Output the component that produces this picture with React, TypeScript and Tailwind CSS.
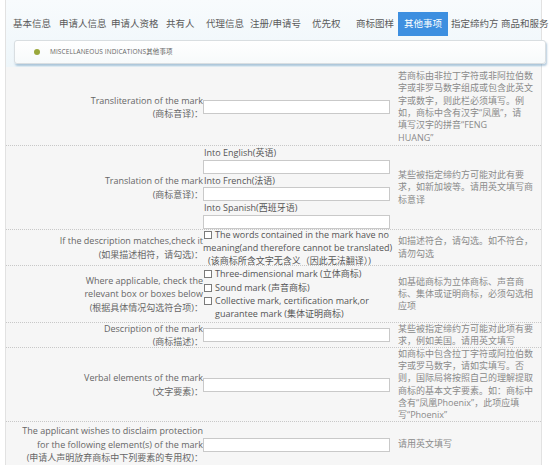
import React from 'react';

const tabs = [
  { label: '基本信息', w: 'w-[46px]' },
  { label: '申请人信息', w: 'w-[52px]' },
  { label: '申请人资格', w: 'w-[55px]' },
  { label: '共有人', w: 'w-[40px]' },
  { label: '代理信息', w: 'w-[44px]' },
  { label: '注册/申请号', w: 'w-[62px]' },
  { label: '优先权', w: 'w-[44px]' },
  { label: '商标图样', w: 'w-[42px]' },
];

const Box = () => (
  <span className="inline-block w-[8px] h-[8px] border border-[#7a7a7a] bg-white mr-[3px] align-[-1px]" />
);

const Input = () => <div className="w-[187px] h-[14px] border border-[#c9c9c9] bg-white" />;

const Label = ({ lines }: { lines: string[] }) => (
  <div className="w-[197px] shrink-0 text-right text-[#666] leading-[13.5px]">
    {lines.map((l) => (
      <div key={l}>{l}</div>
    ))}
  </div>
);

const Hint = ({ lines }: { lines: string[] }) => (
  <div className="flex-1 pl-[3px] text-[9px] leading-[12.3px] text-[#8a8a8a]">
    {lines.map((l) => (
      <div key={l}>{l}</div>
    ))}
  </div>
);

export default function App() {
  return (
    <div className="w-[558px] h-[465px] overflow-hidden bg-white font-['Open_Sans','Noto_Sans_CJK_SC',sans-serif] text-[9px]">
      <div className="ml-[5px] w-[537px] h-full border-l border-r border-[#e2e2e2]">
        {/* top tabs + header */}
        <div className="h-[67px] bg-gradient-to-b from-[#f8fbfd] to-[#eef6fa] pt-[12px]">
          <div className="flex items-center h-[24px] pl-[7px] text-[9.5px] text-[#5a5a5a] whitespace-nowrap">
            {tabs.map((t) => (
              <span key={t.label} className={`${t.w} shrink-0`}>
                {t.label}
              </span>
            ))}
            <span className="w-[50px] h-[24px] shrink-0 bg-[#3d8fe0] text-white flex items-center justify-center">
              其他事项
            </span>
            <span className="w-[50px] shrink-0 ml-[3px]">指定缔约方</span>
            <span className="shrink-0">商品和服务</span>
          </div>
          <div className="ml-[8px] mt-[4px] w-[532px] h-[24px] flex items-center border border-[#d9dee1] rounded-[3px] bg-gradient-to-b from-white to-[#f7fafb] shadow-[1px_2px_2px_rgba(90,140,180,0.45)]">
            <span className="ml-[19px] w-[6px] h-[6px] rounded-full bg-[#9aa83c]" />
            <span className="ml-[10px] text-[6.5px] text-[#666] tracking-[0.1px]">MISCELLANEOUS INDICATIONS其他事项</span>
          </div>
        </div>

        <div className="bg-[#f6f6f6] h-full pt-[2px]">
          {/* row 1 */}
          <div className="flex items-center h-[77px] border-b border-dotted border-[#c8c8c8]">
            <Label lines={['Transliteration of the mark', '(商标音译)：']} />
            <div className="w-[192px] shrink-0">
              <Input />
            </div>
            <Hint
              lines={[
                '若商标由非拉丁字符或非阿拉伯数',
                '字或非罗马数字组成或包含此英文',
                '字或数字，则此栏必须填写。例',
                '如，商标中含有汉字“凤凰”，请',
                '填写汉字的拼音“FENG',
                'HUANG”',
              ]}
            />
          </div>

          {/* row 2 */}
          <div className="flex items-center h-[84px] border-b border-dotted border-[#c8c8c8]">
            <Label lines={['Translation of the mark', '(商标意译)：']} />
            <div className="w-[192px] shrink-0 text-[#555] leading-[13.5px]">
              <div className="pl-[1px]">Into English(英语)</div>
              <Input />
              <div className="pl-[1px]">Into French(法语)</div>
              <Input />
              <div className="pl-[1px]">Into Spanish(西班牙语)</div>
              <Input />
            </div>
            <Hint
              lines={['某些被指定缔约方可能对此有要', '求，如新加坡等。请用英文填写商', '标意译']}
            />
          </div>

          {/* row 3 */}
          <div className="flex items-center h-[36px] border-b border-dotted border-[#c8c8c8]">
            <Label lines={['If the description matches,check it', '(如果描述相符，请勾选)：']} />
            <div className="w-[192px] shrink-0 text-[#555] leading-[13px] whitespace-nowrap">
              <div className="pl-[1px]">
                <Box />
                The words contained in the mark have no
              </div>
              <div>meaning(and therefore cannot be translated)</div>
              <div className="pl-[5px]">(该商标所含文字无含义（因此无法翻译）)</div>
            </div>
            <Hint lines={['如描述符合，请勾选。如不符合，', '请勿勾选']} />
          </div>

          {/* row 4 */}
          <div className="flex items-center h-[57px] border-b border-dotted border-[#c8c8c8]">
            <Label
              lines={['Where applicable, check the', 'relevant box or boxes below', '(根据具体情况勾选符合项)：']}
            />
            <div className="w-[192px] shrink-0 text-[#555] leading-[13.3px] whitespace-nowrap pl-[1px]">
              <div>
                <Box />
                Three-dimensional mark (立体商标)
              </div>
              <div>
                <Box />
                Sound mark (声音商标)
              </div>
              <div>
                <Box />
                Collective mark, certification mark,or
              </div>
              <div className="pl-[11px]">guarantee mark (集体证明商标)</div>
            </div>
            <Hint lines={['如基础商标为立体商标、声音商', '标、集体或证明商标，必须勾选相', '应项']} />
          </div>

          {/* row 5 */}
          <div className="flex items-center h-[25px] border-b border-dotted border-[#c8c8c8]">
            <Label lines={['Description of the mark', '(商标描述)：']} />
            <div className="w-[192px] shrink-0">
              <Input />
            </div>
            <Hint lines={['某些被指定缔约方可能对此项有要', '求，例如美国。请用英文填写']} />
          </div>

          {/* row 6 */}
          <div className="flex items-center h-[74px] border-b border-dotted border-[#c8c8c8]">
            <Label lines={['Verbal elements of the mark', '(文字要素)：']} />
            <div className="w-[192px] shrink-0">
              <Input />
            </div>
            <Hint
              lines={[
                '如商标中包含拉丁字符或阿拉伯数',
                '字或罗马数字，请如实填写。否',
                '则，国际局将按照自己的理解提取',
                '商标的基本文字要素。如：商标中',
                '含有“凤凰Phoenix”，此项应填',
                '写“Phoenix”',
              ]}
            />
          </div>

          {/* row 7 */}
          <div className="flex items-center h-[46px] border-b border-dotted border-[#c8c8c8]">
            <Label
              lines={[
                'The applicant wishes to disclaim protection',
                'for the following element(s) of the mark',
                '(申请人声明放弃商标中下列要素的专用权)：',
              ]}
            />
            <div className="w-[192px] shrink-0">
              <Input />
            </div>
            <Hint lines={['请用英文填写']} />
          </div>
        </div>
      </div>
    </div>
  );
}
